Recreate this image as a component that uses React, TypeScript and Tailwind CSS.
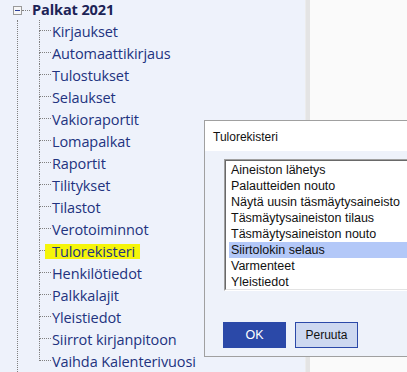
import React from "react";

const items = [
  "Kirjaukset",
  "Automaattikirjaus",
  "Tulostukset",
  "Selaukset",
  "Vakioraportit",
  "Lomapalkat",
  "Raportit",
  "Tilitykset",
  "Tilastot",
  "Verotoiminnot",
  "Tulorekisteri",
  "Henkilötiedot",
  "Palkkalajit",
  "Yleistiedot",
  "Siirrot kirjanpitoon",
  "Vaihda Kalenterivuosi",
];

const listItems = [
  "Aineiston lähetys",
  "Palautteiden nouto",
  "Näytä uusin täsmäytysaineisto",
  "Täsmäytysaineiston tilaus",
  "Täsmäytysaineiston nouto",
  "Siirtolokin selaus",
  "Varmenteet",
  "Yleistiedot",
];

export default function App() {
  return (
    <div className="relative w-[407px] h-[372px] overflow-hidden flex" style={{ fontFamily: "'Open Sans', 'Noto Sans', sans-serif" }}>
      {/* Left tree panel */}
      <div className="w-[305px] h-full bg-[#eef2fb] flex flex-col">
        <div className="flex items-center h-[21px] pl-[13px]">
          <div className="w-[9px] h-[9px] border border-[#9a9a9a] bg-[#f6f6f6] flex items-center justify-center">
            <div className="w-[5px] h-[1px] bg-[#2b3f9a]" />
          </div>
          <div className="w-[8px] border-t border-dotted border-[#808080]" />
          <span className="ml-[2px] text-[14.5px] font-bold text-[#1c2356] leading-none tracking-[-0.1px]">Palkat 2021</span>
        </div>
        <div className="flex-1 ml-[17px] border-l border-dotted border-[#808080] pl-[21px]">
          {items.map((it, i) => {
            const last = i === items.length - 1;
            const sel = it === "Tulorekisteri";
            return (
              <div key={it} className="flex h-[22px]">
                <div className="w-[12px] flex flex-col">
                  <div className="h-[11px] border-l border-b border-dotted border-[#808080]" />
                  <div className={"h-[11px] " + (last ? "" : "border-l border-dotted border-[#808080]")} />
                </div>
                <div className="flex items-center">
                  <span
                    className={
                      "text-[14.5px] leading-[15px] text-[#22337f] tracking-[-0.1px] " +
                      (sel ? "bg-[#f5f50a] text-[#1f2c4a] -ml-[6px] pl-[7px] pr-[5px]" : "px-[1px]")
                    }
                  >
                    {it}
                  </span>
                </div>
              </div>
            );
          })}
        </div>
      </div>
      {/* Separator */}
      <div className="w-[5px] h-full bg-[#e4e4e4] border-l border-[#ececec]" />
      {/* Right panel */}
      <div className="flex-1 h-full bg-[#fafafa]" />

      {/* Dialog */}
      <div
        className="absolute left-[204px] top-[120px] w-[230px] h-[237px] border border-[#a0a0a0] bg-[#eef2fa] flex flex-col"
        style={{ fontFamily: "'Liberation Sans', Arial, sans-serif" }}
      >
        <div className="h-[30px] bg-white flex items-center pl-[8px] pt-[2px] text-[12px] text-[#111]">
          Tulorekisteri
        </div>
        <div className="pl-[19px] pt-[8px]">
          <div className="h-[132px] border-t border-l border-[#a0a0a0] border-b border-b-[#ffffff]">
            <div className="h-full border-t border-l border-[#696969] border-b border-b-[#e3e3e3] bg-white pt-[1px] pl-[3px]">
              {listItems.map((li) => (
                <div
                  key={li}
                  className={
                    "h-[16px] flex items-center pl-[2px] text-[12.5px] text-[#111] " +
                    (li === "Siirtolokin selaus" ? "bg-[#b3c8f8]" : "")
                  }
                >
                  {li}
                </div>
              ))}
            </div>
          </div>
          <div className="flex gap-[9px] mt-[31px] -ml-[1px]">
            <div className="w-[63px] h-[26px] bg-[#2b49a8] text-white text-[12.5px] flex items-center justify-center">
              OK
            </div>
            <div className="w-[63px] h-[26px] bg-[#cdd8f0] border border-[#2b49a8] text-[#111] text-[12px] flex items-center justify-center">
              Peruuta
            </div>
          </div>
        </div>
      </div>
    </div>
  );
}
